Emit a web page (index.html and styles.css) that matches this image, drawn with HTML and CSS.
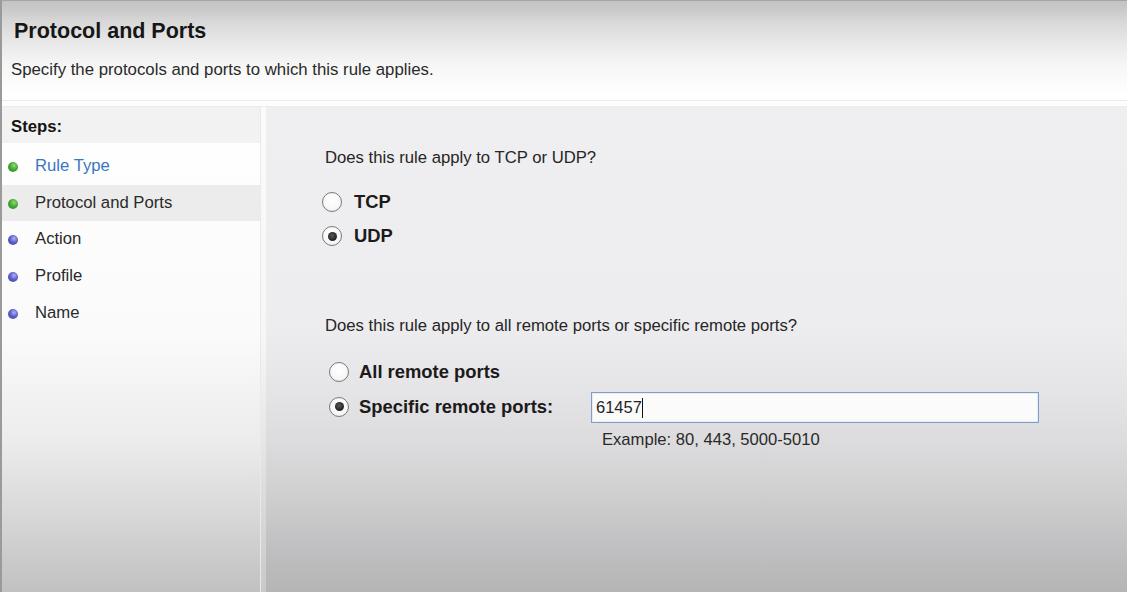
FILE: index.html
```html
<!DOCTYPE html>
<html lang="en">
<head>
<meta charset="utf-8">
<title>Protocol and Ports</title>
<link rel="stylesheet" href="styles.css">
</head>
<body>
<div class="window">
  <header class="head">
    <h1 class="title">Protocol and Ports</h1>
    <p class="subtitle">Specify the protocols and ports to which this rule applies.</p>
  </header>
  <div class="sep"></div>
  <div class="body">
    <aside class="steps">
      <div class="steps-head">Steps:</div>
      <ul class="step-list">
        <li class="step link"><span class="dot green"></span>Rule Type</li>
        <li class="step current"><span class="dot green"></span>Protocol and Ports</li>
        <li class="step"><span class="dot blue"></span>Action</li>
        <li class="step"><span class="dot blue"></span>Profile</li>
        <li class="step"><span class="dot blue"></span>Name</li>
      </ul>
    </aside>
    <div class="gutter"></div>
    <main class="content">
      <p class="question q1">Does this rule apply to TCP or UDP?</p>
      <div class="radios proto">
        <label class="radio"><span class="circle"></span>TCP</label>
        <label class="radio checked"><span class="circle"></span>UDP</label>
      </div>
      <p class="question q2">Does this rule apply to all remote ports or specific remote ports?</p>
      <div class="radios ports">
        <label class="radio"><span class="circle"></span>All remote ports</label>
        <div class="port-row">
          <label class="radio checked"><span class="circle"></span>Specific remote ports:</label>
          <div class="textbox">61457<span class="caret"></span></div>
        </div>
      </div>
      <p class="example">Example: 80, 443, 5000-5010</p>
    </main>
  </div>
</div>
</body>
</html>
```
FILE: styles.css
```css
* { box-sizing: border-box; }
html, body {
  margin: 0;
  padding: 0;
  width: 1127px;
  height: 592px;
  overflow: hidden;
  font-family: "Liberation Sans", Arial, sans-serif;
  color: #262626;
}
.window {
  width: 1127px;
  height: 592px;
  border-left: 2px solid #9a9a9a;
  border-top: 1px solid #a4a4a4;
  display: flex;
  flex-direction: column;
}
.head {
  height: 99px;
  padding-left: 12px;
  background: linear-gradient(to bottom,
    #c3c3c3 0px, #cbcbcb 10px, #d7d7d7 20px, #e3e3e3 35px,
    #eeeeee 50px, #f6f6f6 65px, #fbfbfb 80px, #ffffff 96px);
}
.title {
  margin: 18px 0 0;
  font-size: 21.5px;
  line-height: 24px;
  font-weight: bold;
  color: #161616;
}
.subtitle {
  margin: 17px 0 0 -3px;
  font-size: 16.8px;
  line-height: 20px;
  color: #2a2a2a;
}
.sep {
  height: 7px;
  border-top: 1px solid #ebebeb;
  border-bottom: 1px solid #ececec;
  background: #fdfdfd;
}
.body {
  flex: 1;
  display: flex;
  min-height: 0;
}
.steps {
  width: 258px;
  background: linear-gradient(to bottom,
    #ffffff 0%, #fafafa 48%, #ececec 69%, #d8d8d8 84%, #c1c1c1 100%);
}
.steps-head {
  height: 36px;
  padding: 3px 0 0 9px;
  display: flex;
  align-items: center;
  font-size: 16.7px;
  font-weight: bold;
  color: #141414;
  background: #f2f2f2;
}
.step-list {
  list-style: none;
  margin: 0;
  padding: 5px 0 0;
}
.step {
  height: 36.6px;
  display: flex;
  align-items: center;
  padding-left: 6px;
  font-size: 16.7px;
  color: #2a2a2a;
}
.step.link { color: #3a76c2; }
.step.current { background: #ececec; }
.dot {
  width: 10px;
  height: 10px;
  border-radius: 50%;
  margin: 2px 17px 0 0;
  flex: none;
}
.dot.green {
  background: radial-gradient(circle at 60% 35%, #8fdc78 0%, #45a936 45%, #2f7f25 100%);
}
.dot.blue {
  background: radial-gradient(circle at 60% 35%, #b0b2f2 0%, #5b5fcb 45%, #3e42a4 100%);
}
.gutter {
  width: 6px;
  background: linear-gradient(to bottom,
    #fbfbfb 0%, #f6f6f6 48%, #e6e6e6 69%, #c9c9c9 100%);
  border-left: 1px solid #e9e9e9;
}
.content {
  flex: 1;
  padding: 41px 0 0 59px;
  background: linear-gradient(to bottom,
    #efeef0 0%, #edecee 45%, #e5e4e6 58%, #dcdbdd 69%, #cfcfd0 80%, #c1c0c2 90%, #b5b5b5 100%);
}
.question {
  margin: 0;
  font-size: 16.7px;
  line-height: 20px;
  color: #262626;
}
.radios {
  display: flex;
  flex-direction: column;
}
.radios.proto {
  margin: 17px 0 0 -3px;
}
.radios.proto .radio { height: 34px; gap: 12px; }
.question.q2 { margin-top: 63px; }
.radios.ports {
  margin: 18px 0 0 4px;
}
.radios.ports .radio { height: 35px; gap: 10px; }
.radio {
  display: flex;
  align-items: center;
  font-size: 18.4px;
  font-weight: bold;
  color: #1c1a1a;
}
.circle {
  width: 20px;
  height: 20px;
  border-radius: 50%;
  border: 1.5px solid #7a7a7a;
  background: radial-gradient(circle at 50% 40%, #ffffff 0%, #f7f7f7 60%, #e3e3e3 100%);
  display: flex;
  align-items: center;
  justify-content: center;
  flex: none;
}
.radio.checked .circle::after {
  content: "";
  width: 9px;
  height: 9px;
  border-radius: 50%;
  background: radial-gradient(circle at 45% 40%, #5a5a5a 0%, #262626 60%, #1a1a1a 100%);
}
.port-row {
  display: grid;
  grid-template-columns: 262px 448px;
  align-items: center;
}
.textbox {
  height: 31px;
  margin-top: 2px;
  border: 1.5px solid #7fa0c4;
  background: #fbfbfb;
  box-shadow: inset 0 0 0 1px #e4ecf5;
  display: flex;
  align-items: center;
  padding-left: 4px;
  font-size: 16.5px;
  color: #262626;
}
.caret {
  width: 1.5px;
  height: 20px;
  background: #111;
}
.example {
  margin: 6px 0 0 277px;
  font-size: 16.6px;
  line-height: 20px;
  color: #2a2a2a;
}
```
